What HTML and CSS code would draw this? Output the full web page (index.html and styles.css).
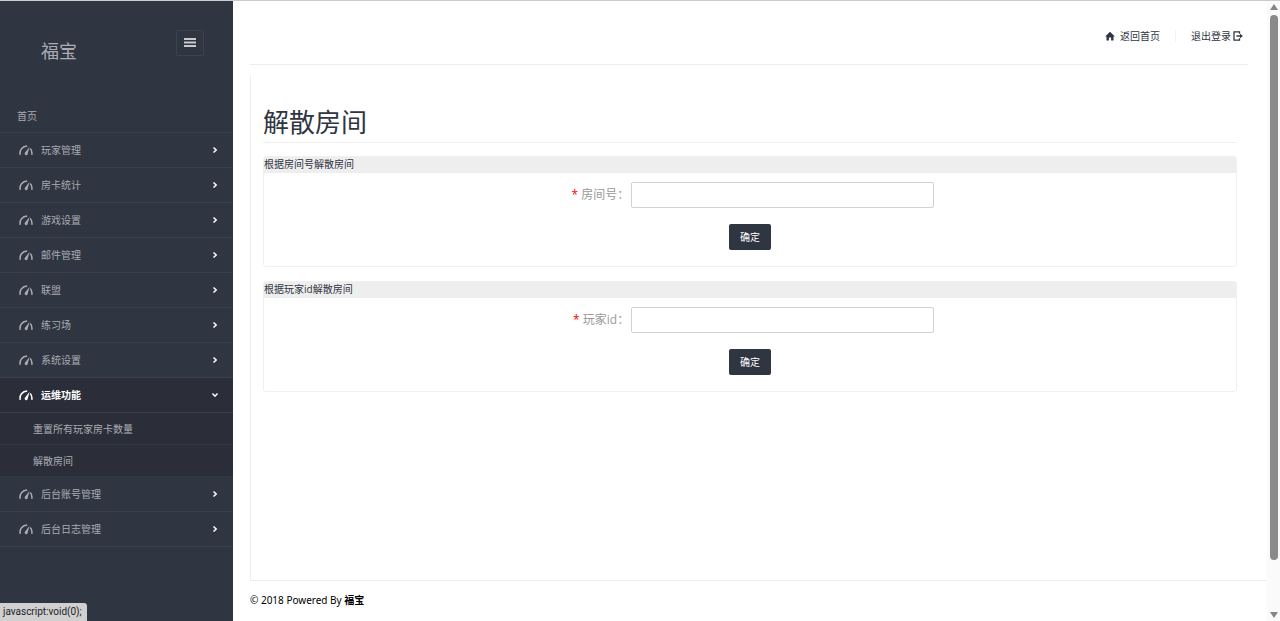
FILE: index.html
```html
<!DOCTYPE html>
<html lang="zh-CN">
<head>
    <meta charset="UTF-8">
    <meta name="viewport" content="width=device-width, initial-scale=1.0">
    <title>解散房间</title>
    <link rel="stylesheet" href="styles.css">
</head>
<body>
    <!-- shared icons -->
    <svg class="defs" width="0" height="0" aria-hidden="true">
        <symbol id="gauge" viewBox="0 0 14 12">
            <path d="M1.200 10.800C.4 6 3.200 2.200 8.200 2M11.200 4.400C12.700 6 13.200 8.200 12.800 10.800" fill="none" stroke="currentColor" stroke-width="1.500"/>
            <path d="M10.600 2.800 8.600 10a1.500 1.500 0 1 1-2.700-1.200z" fill="currentColor"/>
        </symbol>
        <symbol id="arrow" viewBox="0 0 8 8">
            <path d="M2.500 1.500 5.200 4 2.500 6.500" fill="none" stroke="currentColor" stroke-width="1.500"/>
        </symbol>
    </svg>

    <div class="wrapper">
        <nav class="sidebar">
            <div class="brand">
                <span class="logo">福宝</span>
                <button class="toggle" type="button" aria-label="菜单">
                    <svg width="12" height="10" viewBox="0 0 12 10"><path d="M0 1h12M0 4.500h12M0 8h12" stroke="currentColor" stroke-width="1.800"/></svg>
                </button>
            </div>
            <a class="home" href="#">首页</a>
            <ul class="menu">
                <li><a href="#"><svg class="gauge"><use href="#gauge"/></svg>玩家管理<svg class="arrow"><use href="#arrow"/></svg></a></li>
                <li><a href="#"><svg class="gauge"><use href="#gauge"/></svg>房卡统计<svg class="arrow"><use href="#arrow"/></svg></a></li>
                <li><a href="#"><svg class="gauge"><use href="#gauge"/></svg>游戏设置<svg class="arrow"><use href="#arrow"/></svg></a></li>
                <li><a href="#"><svg class="gauge"><use href="#gauge"/></svg>邮件管理<svg class="arrow"><use href="#arrow"/></svg></a></li>
                <li><a href="#"><svg class="gauge"><use href="#gauge"/></svg>联盟<svg class="arrow"><use href="#arrow"/></svg></a></li>
                <li><a href="#"><svg class="gauge"><use href="#gauge"/></svg>练习场<svg class="arrow"><use href="#arrow"/></svg></a></li>
                <li><a href="#"><svg class="gauge"><use href="#gauge"/></svg>系统设置<svg class="arrow"><use href="#arrow"/></svg></a></li>
                <li class="open">
                    <a href="#"><svg class="gauge"><use href="#gauge"/></svg>运维功能<svg class="arrow"><use href="#arrow"/></svg></a>
                    <ul class="submenu">
                        <li><a href="#">重置所有玩家房卡数量</a></li>
                        <li><a href="#">解散房间</a></li>
                    </ul>
                </li>
                <li><a href="#"><svg class="gauge"><use href="#gauge"/></svg>后台账号管理<svg class="arrow"><use href="#arrow"/></svg></a></li>
                <li><a href="#"><svg class="gauge"><use href="#gauge"/></svg>后台日志管理<svg class="arrow"><use href="#arrow"/></svg></a></li>
            </ul>
        </nav>

        <div class="page">
            <header class="topbar">
                <a href="#">
                    <svg width="10" height="10" viewBox="0 0 10 10"><path d="M5 .8 9.800 5.400H8.500v4.200H6.100V6.600H3.900v3H1.500V5.400H.2z" fill="currentColor"/></svg>
                    返回首页
                </a>
                <a class="logout" href="#">退出登录<svg width="10" height="10" viewBox="0 0 10 10"><path d="M6.500 2.800V.8H1v8.400h5.500v-2M3.500 5h4" fill="none" stroke="currentColor" stroke-width="1.300"/><path d="M7 2.800 9.900 5 7 7.200z" fill="currentColor"/></svg></a>
            </header>

            <main class="content">
                <h1>解散房间</h1>
                <section class="panel">
                    <h2>根据房间号解散房间</h2>
                    <form>
                        <div class="row">
                            <label for="room"><span class="required">*</span> 房间号：</label>
                            <input type="text" id="room" name="room">
                        </div>
                        <button class="submit" type="button">确定</button>
                    </form>
                </section>
                <section class="panel">
                    <h2>根据玩家id解散房间</h2>
                    <form>
                        <div class="row">
                            <label for="player"><span class="required">*</span> 玩家id：</label>
                            <input type="text" id="player" name="player">
                        </div>
                        <button class="submit" type="button">确定</button>
                    </form>
                </section>
            </main>

            <footer>© 2018 Powered By <b>福宝</b></footer>
        </div>

        <div class="scrollbar" aria-hidden="true">
            <svg width="8" height="6" viewBox="0 0 8 6"><path d="M4 0 8 6H0z" fill="currentColor"/></svg>
            <div class="track"><div class="thumb"></div></div>
            <svg width="8" height="6" viewBox="0 0 8 6"><path d="M0 0h8L4 6z" fill="currentColor"/></svg>
        </div>
    </div>

    <div class="status">javascript:void(0);</div>
</body>
</html>
```
FILE: styles.css
```css
*, ::before, ::after { box-sizing: border-box; margin: 0; padding: 0; }
body { font: 10px/16px "Open Sans", "Noto Sans CJK SC", sans-serif; color: #2f3542; background: #fff; }
a { color: inherit; text-decoration: none; }
ul { list-style: none; }
button, input { font: inherit; }
.defs { position: absolute; }
.wrapper { display: flex; min-height: 100vh; border-top: 1px solid #ccc; }

/* sidebar */
.sidebar { width: 233px; flex: none; background: #2f3541; color: #a9acb2; }
.brand { display: flex; justify-content: space-between; align-items: flex-start; height: 98px; padding: 29px 29px 0 41px; }
.logo { font-size: 18px; line-height: 42px; }
.toggle { display: flex; align-items: center; justify-content: center; width: 28px; height: 26px; border: 1px solid #3d434e; border-radius: 2px; background: none; color: #c8cacd; }
.home { display: block; height: 34px; padding: 9px 17px; border-bottom: 1px solid #393f4b; }
.menu > li > a { display: flex; align-items: center; height: 35px; padding: 0 14px 0 19px; border-bottom: 1px solid #393f4b; }
.gauge { width: 14px; height: 12px; margin-right: 8px; }
.arrow { width: 8px; height: 8px; margin-left: auto; color: #fff; }
.open { background: #2b2e39; }
.open > a { color: #fff; font-weight: bold; }
.open .arrow { transform: rotate(90deg); }
.submenu a { display: block; height: 32px; padding: 8px 33px; border-bottom: 1px solid #333743; }

/* main area */
.page { flex: 1; display: flex; flex-direction: column; padding-left: 17px; }
.topbar { display: flex; justify-content: flex-end; align-items: center; height: 64px; margin-right: 19px; padding: 6px 5px 0 0; border-bottom: 1px solid #eee; }
.topbar a { display: flex; align-items: center; gap: 5px; }
.topbar .logout { gap: 2px; margin-left: 15px; padding-left: 15px; border-left: 1px solid #f3f3f3; line-height: 12px; }
.content { flex: 1; margin-top: 10px; padding: 26px 30px 0 12px; border-left: 1px solid #eee; border-bottom: 1px solid #eee; }
h1 { height: 42px; margin-bottom: 13px; border-bottom: 1px solid #f0f0f0; font-size: 26px; font-weight: normal; line-height: 42px; }
.panel { margin-bottom: 14px; border: 1px solid #f0f0f0; border-radius: 3px; }
.panel h2 { height: 16px; background: #eee; font-size: 10px; font-weight: normal; line-height: 14px; }
.panel form { padding: 9px 0 16px; text-align: center; }
.row { display: grid; grid-template-columns: 17fr 14fr 14fr; margin-bottom: 16px; }
.row label { padding-right: 2px; color: #999; font-size: 12px; line-height: 26px; text-align: right; }
.required { color: #f00; }
.row input { min-width: 0; height: 26px; padding: 0 8px; border: 1px solid #d2d2d2; border-radius: 2px; }
.submit { display: block; width: 42px; height: 26px; margin: 0 auto; border: 0; border-radius: 2px; background: #2f3541; color: #fff; }
footer { height: 40px; padding-top: 11px; color: #000; font-family: "Noto Sans", "Noto Sans CJK SC", sans-serif; }

/* scrollbar and link status */
.scrollbar { display: flex; flex-direction: column; align-items: center; justify-content: space-between; width: 13px; padding: 3px 0; background: #fafafa; color: #858585; }
.track { flex: 1; margin: 5px 0; }
.thumb { width: 8px; height: 92%; border-radius: 4px; background: #8a8a8a; }
.status { position: fixed; left: 0; bottom: 0; padding: 1px 5px 1px 3px; border-radius: 0 3px 0 0; background: #d0d0d0; color: #222; font-family: Roboto, sans-serif; }
```
